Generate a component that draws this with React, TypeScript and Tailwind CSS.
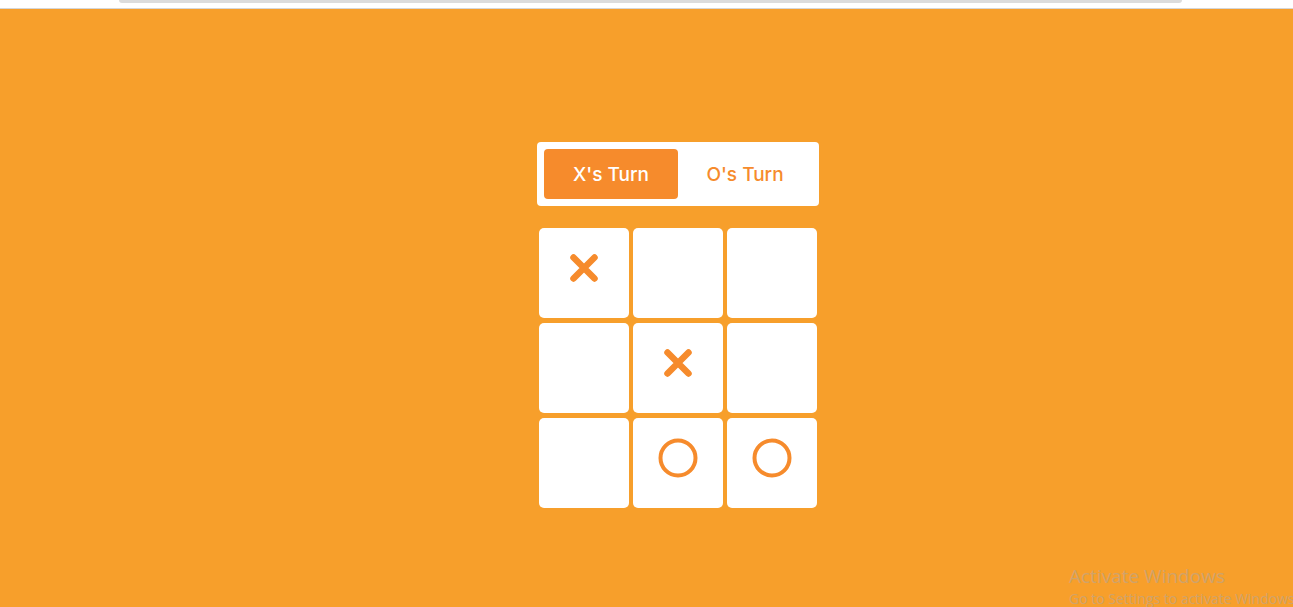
import React from "react";

const XMark = () => (
  <svg width="30" height="30" viewBox="0 0 30 30">
    <path d="M4.5 4.5 L25.5 25.5 M25.5 4.5 L4.5 25.5" stroke="#f68b2c" strokeWidth="6.5" strokeLinecap="round" fill="none" />
  </svg>
);

const OMark = () => (
  <svg width="40" height="40" viewBox="0 0 40 40">
    <circle cx="20" cy="20" r="17.5" stroke="#f68b2c" strokeWidth="4" fill="none" />
  </svg>
);

const board: ("X" | "O" | "")[] = ["X", "", "", "", "X", "", "", "O", "O"];

export default function App() {
  return (
    <div className="relative flex h-[607px] w-full flex-col overflow-hidden" style={{ fontFamily: "Inter, 'Noto Sans', sans-serif" }}>
      <div className="flex h-[9px] shrink-0 justify-center border-b border-[#d6d6d6] bg-white pl-[8px]">
        <div className="h-[3px] w-[1063px] rounded-b-[3px] bg-[#dcdcdc]" />
      </div>
      <main className="flex flex-1 flex-col items-center bg-[#f79f2b] pl-[63px] pt-[133px]">
        <div className="flex h-[64px] w-[282px] rounded-[4px] bg-white p-[7px]">
          <button className="flex flex-1 items-center justify-center rounded-[4px] bg-[#f68b2c] pt-[3px] text-[19px] font-medium text-white">
            X's Turn
          </button>
          <button className="flex flex-1 items-center justify-center pt-[3px] text-[19px] font-medium text-[#f68b2c]">
            O's Turn
          </button>
        </div>
        <div className="mt-[22px] grid grid-cols-[90px_90px_90px] gap-x-[4px] gap-y-[5px]">
          {board.map((v, i) => (
            <div key={i} className="flex h-[90px] w-[90px] items-center justify-center rounded-[5px] bg-white pb-[10px]">
              {v === "X" && <XMark />}
              {v === "O" && <OMark />}
            </div>
          ))}
        </div>
      </main>
      <div className="pointer-events-none absolute left-[1069px] top-[563px] whitespace-nowrap text-[#cfa36b]" style={{ fontFamily: "'Open Sans', 'Noto Sans', sans-serif" }}>
        <div className="text-[19px] leading-[26px]">Activate Windows</div>
        <div className="text-[14px] leading-[19px]">Go to Settings to activate Windows.</div>
      </div>
    </div>
  );
}
